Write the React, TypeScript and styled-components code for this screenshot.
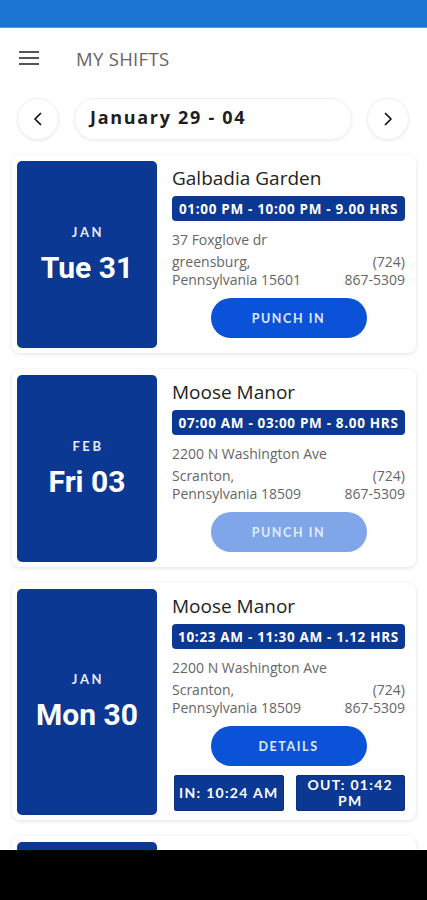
import React from "react";
import styled, { createGlobalStyle } from "styled-components";

const GlobalStyle = createGlobalStyle`
  html, body { margin: 0; padding: 0; background: #ffffff; }
  * { box-sizing: border-box; }
`;

const Screen = styled.div`
  height: 900px;
  display: flex;
  flex-direction: column;
  overflow: hidden;
  font-family: "Open Sans", "Noto Sans", sans-serif;
  background: #ffffff;
`;

const StatusBar = styled.div`
  height: 28px;
  flex: none;
  background: #1a74d0;
  border-bottom: 1px solid #5d9be0;
`;

const Header = styled.header`
  height: 60px;
  flex: none;
  display: flex;
  align-items: center;
  padding-left: 19px;
`;

const Burger = styled.div`
  width: 20px;
  display: flex;
  flex-direction: column;
  gap: 4px;
  span {
    display: block;
    height: 2px;
    background: #555;
  }
`;

const Title = styled.h1`
  margin: 0 0 0 37px;
  font-size: 18.5px;
  font-weight: 400;
  color: #666;
  letter-spacing: 0.3px;
`;

const NavRow = styled.div`
  flex: none;
  display: flex;
  align-items: center;
  gap: 15px;
  padding: 10px 18px 0 17px;
`;

const RoundBtn = styled.button`
  width: 42px;
  height: 42px;
  flex: none;
  border-radius: 50%;
  border: 1px solid #f0f0f0;
  background: #fff;
  box-shadow: 0 1px 3px rgba(0, 0, 0, 0.08);
  display: flex;
  align-items: center;
  justify-content: center;
  padding: 0;
`;

const RangePill = styled.div`
  flex: 1;
  height: 42px;
  border-radius: 21px;
  border: 1px solid #f0f0f0;
  box-shadow: 0 1px 3px rgba(0, 0, 0, 0.08);
  display: flex;
  align-items: center;
  padding: 0 0 4px 15px;
  font-size: 18px;
  font-weight: 700;
  letter-spacing: 1.7px;
  color: #1e1e1e;
`;

const List = styled.div`
  flex: 1;
  overflow: hidden;
  display: flex;
  flex-direction: column;
  gap: 16px;
  padding: 15px 11px 0 12px;
`;

const Card = styled.div`
  flex: none;
  display: flex;
  padding: 6px 11px 5px 5px;
  border-radius: 8px;
  background: #fff;
  box-shadow: 0 1px 4px rgba(0, 0, 0, 0.12);
`;

const DateBlock = styled.div<{ $stub?: boolean }>`
  width: 140px;
  flex: none;
  min-height: ${(p) => (p.$stub ? "60px" : "0")};
  border-radius: 5px;
  background: #0b3892;
  color: #fff;
  display: flex;
  flex-direction: column;
  align-items: center;
  justify-content: center;
`;

const Month = styled.div`
  font-family: Lato, sans-serif;
  font-weight: 700;
  font-size: 13px;
  line-height: 16px;
  letter-spacing: 2.6px;
  margin-left: 2px;
  color: #e8ecf7;
`;

const Day = styled.div`
  font-family: Roboto, sans-serif;
  font-weight: 700;
  font-size: 30px;
  line-height: 36px;
  margin-top: 10px;
`;

const Info = styled.div`
  flex: 1;
  min-width: 0;
  margin-left: 15px;
  display: flex;
  flex-direction: column;
`;

const Place = styled.div`
  margin-top: 4px;
  font-size: 19px;
  line-height: 26px;
  color: #222;
`;

const TimeBadge = styled.div`
  margin-top: 5px;
  height: 25px;
  border-radius: 4px;
  background: #0b3892;
  color: #fff;
  font-weight: 700;
  font-size: 13.5px;
  letter-spacing: 0.68px;
  display: flex;
  align-items: center;
  justify-content: center;
  white-space: nowrap;
`;

const Street = styled.div`
  margin-top: 10px;
  font-size: 14px;
  line-height: 18px;
  color: #666;
`;

const CityRow = styled.div`
  margin-top: 4px;
  display: flex;
  justify-content: space-between;
  font-size: 14px;
  line-height: 18px;
  color: #666;
`;

const Phone = styled.div`
  text-align: right;
`;

const ActionBtn = styled.button<{ $disabled?: boolean }>`
  align-self: center;
  margin: 9px 0 10px;
  width: 156px;
  height: 40px;
  border: none;
  border-radius: 20px;
  background: ${(p) => (p.$disabled ? "#7ea6e9" : "#0a53d9")};
  color: ${(p) => (p.$disabled ? "#e2ebfb" : "#dfe8ff")};
  font-family: Lato, sans-serif;
  font-weight: 700;
  font-size: 12.5px;
  letter-spacing: 1.6px;
  padding: 0;
`;

const PunchRow = styled.div`
  margin: -1px 0 4px 2px;
  display: grid;
  grid-template-columns: 1fr 1fr;
  gap: 12px;
`;

const PunchBox = styled.div`
  height: 36px;
  border-radius: 2px;
  background: #0b3892;
  border: 1px solid #08307e;
  color: #fff;
  font-family: Lato, sans-serif;
  font-weight: 700;
  font-size: 14px;
  line-height: 16px;
  letter-spacing: 1.3px;
  display: flex;
  align-items: center;
  justify-content: center;
  text-align: center;
  padding: 0;
  white-space: pre;
`;

const NavBar = styled.div`
  height: 50px;
  flex: none;
  background: #000;
`;

const Chevron = ({ dir }: { dir: "left" | "right" }) => (
  <svg width="14" height="16" viewBox="0 0 14 16" fill="none">
    <path
      d={dir === "left" ? "M9.5 2.5 L4 8 L9.5 13.5" : "M4.5 2.5 L10 8 L4.5 13.5"}
      stroke="#111"
      strokeWidth="1.7"
      strokeLinecap="round"
      strokeLinejoin="round"
    />
  </svg>
);

type Shift = {
  month: string;
  day: string;
  place: string;
  time: string;
  street: string;
  city: string;
  state: string;
  action: string;
  disabled?: boolean;
  punch?: { inT: string; outT: string };
};

const shifts: Shift[] = [
  {
    month: "JAN",
    day: "Tue 31",
    place: "Galbadia Garden",
    time: "01:00 PM - 10:00 PM - 9.00 HRS",
    street: "37 Foxglove dr",
    city: "greensburg,",
    state: "Pennsylvania 15601",
    action: "PUNCH IN",
  },
  {
    month: "FEB",
    day: "Fri 03",
    place: "Moose Manor",
    time: "07:00 AM - 03:00 PM - 8.00 HRS",
    street: "2200 N Washington Ave",
    city: "Scranton,",
    state: "Pennsylvania 18509",
    action: "PUNCH IN",
    disabled: true,
  },
  {
    month: "JAN",
    day: "Mon 30",
    place: "Moose Manor",
    time: "10:23 AM - 11:30 AM - 1.12 HRS",
    street: "2200 N Washington Ave",
    city: "Scranton,",
    state: "Pennsylvania 18509",
    action: "DETAILS",
    punch: { inT: "IN: 10:24 AM", outT: "OUT: 01:42\nPM" },
  },
];

export default function App() {
  return (
    <>
      <GlobalStyle />
      <Screen>
        <StatusBar />
        <Header>
          <Burger>
            <span />
            <span />
            <span />
          </Burger>
          <Title>MY SHIFTS</Title>
        </Header>
        <NavRow>
          <RoundBtn aria-label="previous">
            <Chevron dir="left" />
          </RoundBtn>
          <RangePill>January 29 - 04</RangePill>
          <RoundBtn aria-label="next">
            <Chevron dir="right" />
          </RoundBtn>
        </NavRow>
        <List>
          {shifts.map((s, i) => (
            <Card key={i}>
              <DateBlock>
                <Month>{s.month}</Month>
                <Day>{s.day}</Day>
              </DateBlock>
              <Info>
                <Place>{s.place}</Place>
                <TimeBadge>{s.time}</TimeBadge>
                <Street>{s.street}</Street>
                <CityRow>
                  <div>
                    {s.city}
                    <br />
                    {s.state}
                  </div>
                  <Phone>
                    (724)
                    <br />
                    867-5309
                  </Phone>
                </CityRow>
                <ActionBtn $disabled={s.disabled}>{s.action}</ActionBtn>
                {s.punch && (
                  <PunchRow>
                    <PunchBox>{s.punch.inT}</PunchBox>
                    <PunchBox>{s.punch.outT}</PunchBox>
                  </PunchRow>
                )}
              </Info>
            </Card>
          ))}
          <Card aria-hidden="true">
            <DateBlock $stub />
          </Card>
        </List>
        <NavBar />
      </Screen>
    </>
  );
}
